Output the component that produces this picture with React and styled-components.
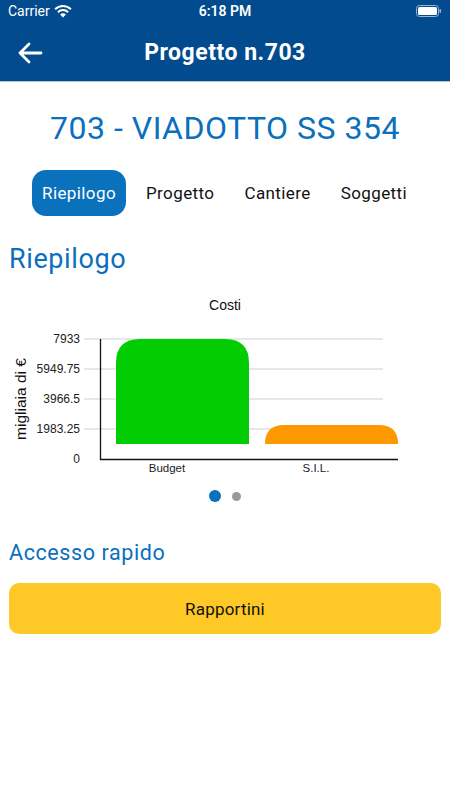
import React from 'react'
import styled, { createGlobalStyle } from 'styled-components'

const GlobalStyle = createGlobalStyle`
	body {
		margin: 0;
		background: #ffffff;
		font-family: Roboto, "Liberation Sans", sans-serif;
	}
`

const Screen = styled.div`
	width: 450px;
	height: 800px;
	display: flex;
	flex-direction: column;
	background: #ffffff;
	overflow: hidden;
`

const Header = styled.div`
	background: #024b8e;
	border-bottom: 1px solid #b9c4d4;
	display: flex;
	flex-direction: column;
`

const StatusBar = styled.div`
	height: 22px;
	padding: 0 8px;
	display: grid;
	grid-template-columns: 1fr auto 1fr;
	align-items: center;
	color: #ffffff;
	font-size: 14px;
`

const Carrier = styled.div`
	display: flex;
	align-items: center;
	gap: 3px;
`

const Clock = styled.div`
	font-weight: 600;
`

const Battery = styled.div`
	justify-self: end;
	display: flex;
	align-items: center;
`

const NavBar = styled.div`
	height: 59px;
	display: flex;
	align-items: center;
	justify-content: center;
	position: relative;
`

const BackButton = styled.div`
	position: absolute;
	left: 16px;
	top: 17px;
	width: 28px;
	height: 28px;
	display: flex;
	align-items: center;
	justify-content: center;
`

const NavTitle = styled.div`
	color: #ffffff;
	font-size: 23px;
	font-weight: 700;
	letter-spacing: 0.5px;
	margin-top: 2px;
`

const ProjectTitle = styled.h1`
	margin: 28px 0 0;
	font-size: 32px;
	line-height: 36px;
	font-weight: 400;
	text-align: center;
	color: #0a6fbd;
	letter-spacing: 0.5px;
`

const Tabs = styled.div`
	margin-top: 24px;
	display: flex;
	align-items: center;
	padding-left: 32px;
`

const Tab = styled.div`
	height: 46px;
	padding: 0 ${p => (p.$active ? '10px' : '15px')};
	margin-right: ${p => (p.$active ? '5px' : '0')};
	display: flex;
	align-items: center;
	border-radius: 14px;
	font-size: 17px;
	letter-spacing: 0.4px;
	background: ${p => (p.$active ? '#0a71bc' : 'transparent')};
	color: ${p => (p.$active ? '#ffffff' : '#111111')};
`

const SectionTitle = styled.h2`
	margin: ${p => p.$top}px 0 0 9px;
	font-size: ${p => p.$size}px;
	line-height: ${p => p.$line}px;
	letter-spacing: 0.6px;
	font-weight: 400;
	color: #0a6fbd;
`

const Chart = styled.svg`
	display: block;
	font-family: "Liberation Sans", Arial, sans-serif;
`

const Dots = styled.div`
	margin-top: 9px;
	height: 12px;
	display: flex;
	justify-content: center;
	align-items: center;
	gap: 11px;
`

const Dot = styled.div`
	width: ${p => (p.$active ? 12 : 9)}px;
	height: ${p => (p.$active ? 12 : 9)}px;
	border-radius: 50%;
	background: ${p => (p.$active ? '#0a71bc' : '#9a9a9a')};
`

const QuickButton = styled.div`
	margin: 17px 9px 0;
	height: 51px;
	border-radius: 10px;
	background: #fec926;
	display: flex;
	align-items: center;
	justify-content: center;
	font-size: 17px;
	letter-spacing: 0.2px;
	color: #111111;
`

const ticks = [
	{ label: '7933', y: 64 },
	{ label: '5949.75', y: 94 },
	{ label: '3966.5', y: 124 },
	{ label: '1983.25', y: 154 },
	{ label: '0', y: 184 },
]

const topRounded = (x, y, w, h, r) =>
	`M${x} ${y + h} L${x} ${y + r} Q${x} ${y} ${x + r} ${y} L${x + w - r} ${y} Q${x + w} ${y} ${x + w} ${y + r} L${x + w} ${y + h} Z`

const CostChart = () => (
	<Chart width="450" height="206" viewBox="0 0 450 206">
		<text x="225" y="35" textAnchor="middle" fontSize="14" fill="#111">Costi</text>
		{ticks.map(t => (
			<g key={t.label}>
				{t.y < 184 && <line x1="84" x2="383" y1={t.y} y2={t.y} stroke="#cfcfcf" strokeWidth="1" />}
				<text x="80" y={t.y + 4} textAnchor="end" fontSize="12" fill="#222">{t.label}</text>
			</g>
		))}
		<text x="27" y="124" transform="rotate(-90 27 124)" textAnchor="middle" fontSize="15.5" fill="#111" dy="-1">migliaia di €</text>
		<path d={topRounded(116, 64, 133, 105, 24)} fill="#02cc02" />
		<path d={topRounded(265, 150, 133, 19, 19)} fill="#fd9800" />
		<line x1="100.5" x2="100.5" y1="64" y2="185" stroke="#111" strokeWidth="1.3" />
		<line x1="100" x2="398" y1="184.5" y2="184.5" stroke="#111" strokeWidth="1.3" />
		<text x="167" y="197" textAnchor="middle" fontSize="11.5" fill="#222">Budget</text>
		<text x="316" y="197" textAnchor="middle" fontSize="11.5" fill="#222">S.I.L.</text>
	</Chart>
)

export default function App() {
	return (
		<Screen>
			<GlobalStyle />
			<Header>
				<StatusBar>
					<Carrier>
						Carrier
						<svg width="20" height="13" viewBox="0 0 20 13">
							<path d="M10 12.5 L7.1 9.6 A4.1 4.1 0 0 1 12.9 9.6 Z" fill="#fff" />
							<path d="M4.9 7.2 A7.3 7.3 0 0 1 15.1 7.2" stroke="#fff" strokeWidth="2" fill="none" />
							<path d="M2.1 4.3 A11.2 11.2 0 0 1 17.9 4.3" stroke="#fff" strokeWidth="2" fill="none" />
						</svg>
					</Carrier>
					<Clock>6:18 PM</Clock>
					<Battery>
						<svg width="26" height="12" viewBox="0 0 26 12">
							<rect x="0.5" y="0.5" width="22" height="11" rx="3" fill="none" stroke="#9fb3cf" strokeWidth="1" />
							<rect x="2" y="2" width="19" height="8" rx="1.6" fill="#fff" />
							<rect x="23.5" y="4" width="1.5" height="4" rx="0.7" fill="#9fb3cf" />
						</svg>
					</Battery>
				</StatusBar>
				<NavBar>
					<BackButton>
						<svg width="26" height="22" viewBox="0 0 26 22">
							<path d="M24 11 H3 M12 2 L3 11 L12 20" stroke="#fff" strokeWidth="2.8" fill="none" strokeLinecap="round" strokeLinejoin="round" />
						</svg>
					</BackButton>
					<NavTitle>Progetto n.703</NavTitle>
				</NavBar>
			</Header>
			<ProjectTitle>703 - VIADOTTO SS 354</ProjectTitle>
			<Tabs>
				<Tab $active>Riepilogo</Tab>
				<Tab>Progetto</Tab>
				<Tab>Cantiere</Tab>
				<Tab>Soggetti</Tab>
			</Tabs>
			<SectionTitle $top={27} $size={27} $line={32}>Riepilogo</SectionTitle>
			<CostChart />
			<Dots>
				<Dot $active />
				<Dot />
			</Dots>
			<SectionTitle $top={38} $size={21.5} $line={26}>Accesso rapido</SectionTitle>
			<QuickButton>Rapportini</QuickButton>
		</Screen>
	)
}
